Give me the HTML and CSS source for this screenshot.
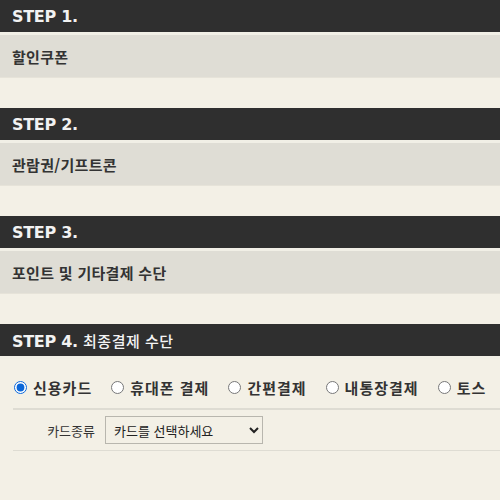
FILE: index.html
```html
<!DOCTYPE html>
<html lang="ko">
<head>
<meta charset="utf-8">
<link rel="stylesheet" href="styles.css">
</head>
<body>
<div class="steps">
  <section class="step">
    <h2 class="step-head">STEP 1.</h2>
    <div class="step-box">할인쿠폰</div>
  </section>
  <section class="step">
    <h2 class="step-head">STEP 2.</h2>
    <div class="step-box">관람권/기프트콘</div>
  </section>
  <section class="step">
    <h2 class="step-head">STEP 3.</h2>
    <div class="step-box">포인트 및 기타결제 수단</div>
  </section>
  <section class="step final">
    <h2 class="step-head">STEP 4. <span class="step-sub">최종결제 수단</span></h2>
    <div class="pay">
      <div class="methods">
        <label class="method"><input type="radio" name="pay" checked><span>신용카드</span></label>
        <label class="method"><input type="radio" name="pay"><span>휴대폰 결제</span></label>
        <label class="method"><input type="radio" name="pay"><span>간편결제</span></label>
        <label class="method"><input type="radio" name="pay"><span>내통장결제</span></label>
        <label class="method"><input type="radio" name="pay"><span>토스</span></label>
      </div>
      <div class="card-row">
        <span class="card-label">카드종류</span>
        <select class="card-select">
          <option>카드를 선택하세요</option>
        </select>
      </div>
    </div>
  </section>
</div>
</body>
</html>
```

FILE: styles.css
```css
html, body {
  margin: 0;
  padding: 0;
  background: #f3f0e6;
}
body {
  font-family: "Noto Sans CJK KR", "DejaVu Sans", sans-serif;
  color: #333;
}
.steps {
  display: flex;
  flex-direction: column;
}
.step {
  height: 108px;
  display: flex;
  flex-direction: column;
}
.step-head {
  margin: 0;
  height: 30px;
  padding-top: 2px;
  background: #2f2f2f;
  color: #f2f2f2;
  font-family: "DejaVu Sans", Verdana, sans-serif;
  font-weight: bold;
  font-size: 16px;
  letter-spacing: -0.3px;
  line-height: 30px;
  padding-left: 12px;
  border-bottom: 3px solid #f1efe6;
}
.step-sub {
  font-family: "Noto Sans CJK KR", sans-serif;
  font-weight: 500;
  font-size: 15px;
  letter-spacing: 0.5px;
  color: #f4f4f4;
}
.step-box {
  height: 42px;
  background: #dfddd5;
  border-bottom: 1px solid #e6e3d9;
  padding-left: 12px;
  display: flex;
  align-items: center;
  font-size: 15px;
  font-weight: bold;
  letter-spacing: 0.3px;
  color: #333;
}
.final {
  height: auto;
}
.pay {
  display: flex;
  flex-direction: column;
}
.methods {
  display: flex;
  align-items: center;
  height: 42px;
  padding-top: 6px;
  margin-top: 1px;
  margin-left: 13px;
  border-bottom: 2px solid #dedcd3;
}
.method {
  display: flex;
  align-items: center;
  font-size: 15px;
  font-weight: bold;
  letter-spacing: 1px;
  color: #333;
  margin-right: 18px;
}
.method:last-child {
  margin-right: 0;
}
.method input {
  width: 13px;
  height: 13px;
  margin: 0 6px 0 1px;
  accent-color: #0a66d8;
}
.card-row {
  display: flex;
  align-items: center;
  height: 40px;
  margin-left: 13px;
  border-bottom: 1px solid #dedcd3;
}
.card-label {
  font-size: 13px;
  color: #333;
  width: 82px;
  text-align: right;
  margin-right: 10px;
}
.card-select {
  box-sizing: border-box;
  width: 158px;
  height: 28px;
  font-family: "Noto Sans CJK KR", sans-serif;
  font-size: 13px;
  color: #222;
  background: #f3f0e6;
  border: 1px solid #b8b6ae;
  padding: 0 4px;
}
```
